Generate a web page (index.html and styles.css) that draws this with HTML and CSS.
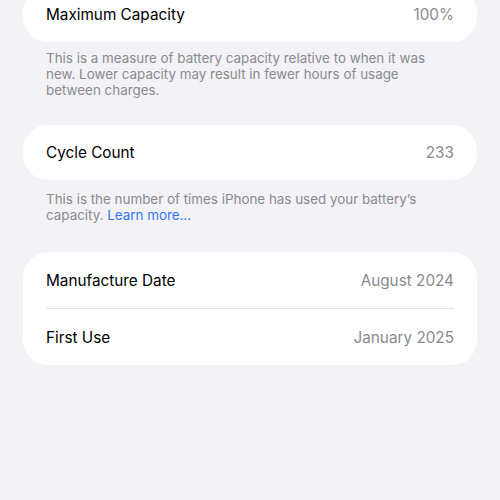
FILE: index.html
```html
<!DOCTYPE html>
<html>
<head>
<meta charset="utf-8">
<link rel="stylesheet" href="styles.css">
</head>
<body>
<div class="page">
  <div class="card first">
    <div class="row"><span class="label">Maximum Capacity</span><span class="value">100%</span></div>
  </div>
  <p class="note note-a">This is a measure of battery capacity relative to when it was new. Lower capacity may result in fewer hours of usage between charges.</p>
  <div class="card">
    <div class="row"><span class="label">Cycle Count</span><span class="value">233</span></div>
  </div>
  <p class="note note-b">This is the number of times iPhone has used your battery’s capacity. <span class="link">Learn more…</span></p>
  <div class="card">
    <div class="row tall"><span class="label">Manufacture Date</span><span class="value">August 2024</span></div>
    <div class="sep"></div>
    <div class="row tall"><span class="label">First Use</span><span class="value">January 2025</span></div>
  </div>
</div>
</body>
</html>
```
FILE: styles.css
```css
html, body {
  margin: 0;
  padding: 0;
  background: #f2f2f7;
  font-family: Inter, "Noto Sans", sans-serif;
  -webkit-font-smoothing: antialiased;
}
.page {
  padding: 0 23px;
  display: flex;
  flex-direction: column;
}
.card {
  background: #ffffff;
  border-radius: 25px;
  padding: 0 23px;
}
.card.first {
  margin-top: -13px;
}
.row {
  height: 55px;
  display: flex;
  align-items: center;
  justify-content: space-between;
  font-size: 15.3px;
}
.row.tall {
  height: 56px;
}
.label {
  color: #000;
}
.value {
  color: #8a8a8e;
}
.sep {
  height: 1px;
  background: #e3e3e8;
}
.note {
  margin: 0 23px;
  font-size: 13.4px;
  line-height: 16px;
  color: #8a8a8e;
}
.note-a {
  margin-top: 8px;
  margin-bottom: 27px;
}
.note-b {
  margin-top: 11px;
  margin-bottom: 29px;
}
.link {
  color: #3478f6;
}
```
